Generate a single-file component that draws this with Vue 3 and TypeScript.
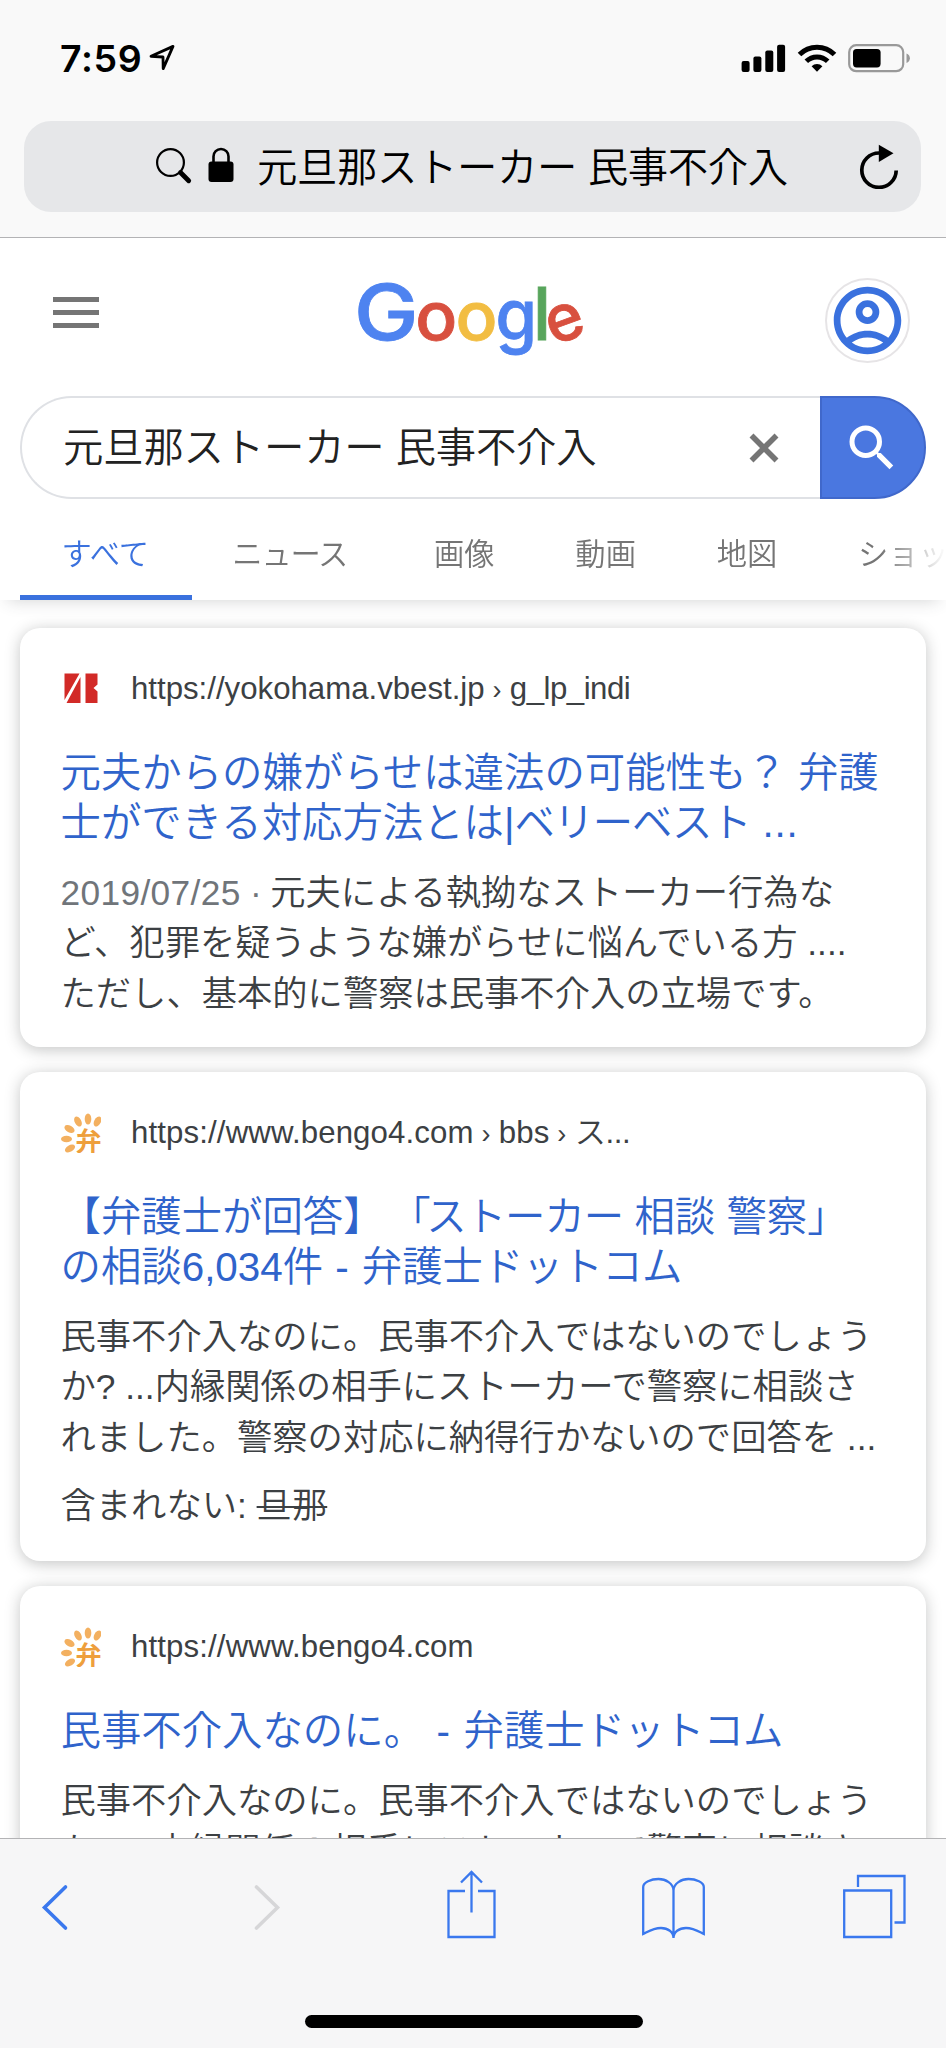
<script setup lang="ts">
interface Run {
  t: string
  ls?: number
}

interface SearchResult {
  icon: 'vbest' | 'bengo'
  url: Run[]
  title: Run[][]
  date?: string
  body: string[]
  missing?: string
}

const query = '元旦那ストーカー 民事不介入'
const tabs: string[] = ['すべて', 'ニュース', '画像', '動画', '地図', 'ショッピング']

const logo = [
  { ch: 'G', x: 354, size: 77, width: 64.5, color: '#4e83f0' },
  { ch: 'o', x: 415.3, size: 67, width: 42, color: '#d8503f' },
  { ch: 'o', x: 455.5, size: 67, width: 42, color: '#f2bd42' },
  { ch: 'g', x: 495.5, size: 70, width: 41.5, color: '#4e83f0' },
  { ch: 'l', x: 533, size: 73.5, width: 18, color: '#58a55c' },
]

const petals = [
  { x: 27, y: 6, r: 90 },
  { x: 17, y: 8.5, r: 62 },
  { x: 36.5, y: 8.5, r: 118 },
  { x: 8.5, y: 16, r: 28 },
  { x: 5.5, y: 26, r: 0 },
  { x: 9, y: 35.5, r: -30 },
]

const results: SearchResult[] = [
  {
    icon: 'vbest',
    url: [{ t: 'https://yokohama.vbest.jp' }, { t: 'g_lp_indi', ls: -0.5 }],
    title: [
      [{ t: '元夫からの嫌がらせは違法の可能性も？ 弁護' }],
      [{ t: '士ができる対応方法とは|' }, { t: 'ベリーベスト', ls: -1.2 }, { t: ' ...', ls: 0.8 }],
    ],
    date: '2019/07/25',
    body: ['元夫による執拗なストーカー行為な', 'ど、犯罪を疑うような嫌がらせに悩んでいる方 ....', 'ただし、基本的に警察は民事不介入の立場です。'],
  },
  {
    icon: 'bengo',
    url: [{ t: 'https://www.bengo4.com', ls: 0.13 }, { t: 'bbs', ls: 0.1 }, { t: 'ス...', ls: -0.4 }],
    title: [
      [{ t: '【弁護士が回答】' }, { t: ' 「', ls: -4.5 }, { t: 'ストーカー', ls: -1 }, { t: ' 相談 警察」' }],
      [{ t: 'の相談6,034件' }, { t: ' - ', ls: 0.9 }, { t: '弁護士' }, { t: 'ドットコム', ls: -0.6 }],
    ],
    body: ['民事不介入なのに。民事不介入ではないのでしょう', 'か? ...内縁関係の相手にストーカーで警察に相談さ', 'れました。警察の対応に納得行かないので回答を ...'],
    missing: '旦那',
  },
  {
    icon: 'bengo',
    url: [{ t: 'https://www.bengo4.com', ls: 0.13 }],
    title: [[{ t: '民事不介入なのに。' }, { t: ' - ', ls: 1.2 }, { t: '弁護士' }, { t: 'ドットコム', ls: -0.8 }]],
    body: ['民事不介入なのに。民事不介入ではないのでしょう', 'か? ...内縁関係の相手にストーカーで警察に相談さ'],
  },
]

const spacing = (run: Run) => ({ letterSpacing: `${run.ls ?? 0}px` })
</script>

<template>
  <div class="screen">
    <header class="chrome">
      <div class="status">
        <span class="time">7:59</span>
        <svg class="loc" width="28" height="28" viewBox="0 0 28 28">
          <path d="M3 12.3 25 2.4 15.2 24.6 15 13z" fill="none" stroke="#000" stroke-width="2.8" stroke-linejoin="round" />
        </svg>
        <svg class="signals" width="170" height="30" viewBox="0 0 170 30">
          <rect x="0.6" y="17" width="8" height="11" rx="2" />
          <rect x="12.4" y="12.5" width="8" height="15.5" rx="2" />
          <rect x="24.3" y="6.6" width="8" height="21.4" rx="2" />
          <rect x="36.1" y="0.8" width="8" height="27.2" rx="2" />
          <g fill="none" stroke="#000" stroke-width="5">
            <path d="M58.5 10.6a24.6 24.6 0 0 1 35 0" />
            <path d="M65.3 17.3a15.2 15.2 0 0 1 21.4 0" />
          </g>
          <path d="M70.6 22.2a7.6 7.6 0 0 1 10.8 0L76 27.8z" />
          <rect x="108.2" y="1.2" width="54" height="26" rx="7" fill="none" stroke="#999" stroke-width="2.2" />
          <rect x="112" y="5" width="27.6" height="18.4" rx="3.6" />
          <path d="M165.5 9.6c2 .8 3.4 2.5 3.4 4.7s-1.4 3.9-3.4 4.7z" fill="#999" />
        </svg>
      </div>
      <div class="address">
        <svg class="mag" width="38" height="38" viewBox="0 0 38 38">
          <circle cx="15.5" cy="15.5" r="13.4" fill="none" stroke="#000" stroke-width="2.2" />
          <path d="m25.5 25.5 8.2 8.2" stroke="#000" stroke-width="4.8" stroke-linecap="round" />
        </svg>
        <svg class="lock" width="26" height="36" viewBox="0 0 26 36">
          <path d="M5.5 16V9.5a7.5 7.5 0 0 1 15 0V16" fill="none" stroke="#000" stroke-width="2.6" />
          <rect x="0.5" y="14.5" width="25" height="20.5" rx="3" />
        </svg>
        <span class="address-text">{{ query }}</span>
        <svg class="reload" width="42" height="46" viewBox="0 0 42 46">
          <path d="M37.2 27.5A17.2 17.2 0 1 1 20 10h2" fill="none" stroke="#000" stroke-width="3.7" />
          <path d="M19.8 1.8 34.5 10.3 19.8 19z" />
        </svg>
      </div>
    </header>

    <main class="page">
      <section class="head">
        <div class="brand">
          <div class="menu"><i></i><i></i><i></i></div>
          <svg class="logo" width="240" height="90" viewBox="350 275 240 90" role="img" aria-label="Google">
            <text
              v-for="(l, i) in logo"
              :key="i"
              :x="l.x"
              y="338.5"
              :font-size="l.size"
              :textLength="l.width"
              lengthAdjust="spacingAndGlyphs"
              :fill="l.color"
              :stroke="l.color"
            >{{ l.ch }}</text>
            <text x="0" y="0" transform="translate(553.3 344.8) rotate(-20)" font-size="65" textLength="37.5" lengthAdjust="spacingAndGlyphs" fill="#d8503f" stroke="#d8503f">e</text>
          </svg>
          <div class="avatar">
            <svg width="81" height="81" viewBox="0 0 24 24">
              <path fill="#3a71de" fill-rule="evenodd" d="M12 2C6.48 2 2 6.48 2 12s4.48 10 10 10 10-4.48 10-10S17.52 2 12 2zM7.35 18.5C8.66 17.56 10.26 17 12 17s3.34.56 4.65 1.5C15.34 19.44 13.74 20 12 20s-3.34-.56-4.65-1.5zm10.79-1.38C16.45 15.8 14.32 15 12 15s-4.45.8-6.14 2.12C4.7 15.73 4 13.95 4 12c0-4.42 3.58-8 8-8s8 3.58 8 8c0 1.95-.7 3.73-1.86 5.12z" />
              <circle cx="12" cy="9.5" r="2.5" fill="none" stroke="#3a71de" stroke-width="2" />
            </svg>
          </div>
        </div>

        <div class="search">
          <div class="field">
            <span>{{ query }}</span>
            <svg width="30" height="30" viewBox="0 0 30 30">
              <path d="M2.5 2.5l25 25M27.5 2.5l-25 25" stroke="#757575" stroke-width="5.6" />
            </svg>
          </div>
          <div class="go">
            <svg width="60" height="60" viewBox="0 0 24 24">
              <path fill="#fff" d="M15.5 14h-.79l-.28-.27A6.471 6.471 0 0 0 16 9.5 6.5 6.5 0 1 0 9.5 16c1.61 0 3.09-.59 4.23-1.57l.27.28v.79l5 4.99L20.49 19l-4.99-5zm-6 0C7.01 14 5 11.99 5 9.5S7.01 5 9.5 5 14 7.01 14 9.5 11.99 14 9.5 14z" />
            </svg>
          </div>
        </div>

        <nav class="tabs">
          <span v-for="(t, i) in tabs" :key="t" class="tab" :class="{ active: i === 0, news: i === 1 }">{{ t }}</span>
        </nav>
      </section>

      <section class="results">
        <article v-for="(r, i) in results" :key="i" class="card">
          <div class="source">
            <svg v-if="r.icon === 'vbest'" class="fav" width="40" height="40" viewBox="0 0 40 40" fill="#d22a27">
              <path d="M3.5 4.5h15L3.5 31zM19.5 8v26h-14z" />
              <path d="M24.5 4.5h12v11l-4 3.5 4 3.5v11.5h-12z" />
            </svg>
            <svg v-else class="fav" width="40" height="40" viewBox="0 0 40 40">
              <ellipse
                v-for="(p, k) in petals"
                :key="k"
                :cx="p.x"
                :cy="p.y"
                rx="5.5"
                ry="3.3"
                :transform="`rotate(${p.r} ${p.x} ${p.y})`"
                fill="#f3b060"
              />
              <text x="14.5" y="37.5" font-size="26" font-weight="700" fill="#ee9f3c">弁</text>
            </svg>
            <span class="url"><template v-for="(part, k) in r.url" :key="k"><b v-if="k > 0"> › </b><i :style="spacing(part)">{{ part.t }}</i></template></span>
          </div>
          <h3 class="title">
            <span v-for="(line, n) in r.title" :key="n"><i v-for="(run, k) in line" :key="k" :style="spacing(run)">{{ run.t }}</i></span>
          </h3>
          <p class="snippet">
            <span v-for="(line, k) in r.body" :key="line"><template v-if="k === 0 && r.date"><em>{{ r.date }}</em><em class="dot"> · </em></template>{{ line }}</span>
          </p>
          <p v-if="r.missing" class="missing">含まれない: <s>{{ r.missing }}</s></p>
        </article>
      </section>
    </main>

    <footer class="toolbar">
      <div class="actions">
        <svg width="64" height="70" viewBox="0 0 64 70">
          <path d="M25.5 17 4.500 37.500 25.500 58" class="chev" />
        </svg>
        <svg width="64" height="70" viewBox="0 0 64 70">
          <path d="M15.500 17 36.500 37.500 15.500 58" class="chev off" />
        </svg>
        <svg width="64" height="70" viewBox="0 0 64 70">
          <path d="M23 21H6.500v46h46v-46H36M29.500 42.500V2.500M19 12.500 29.500 2l10.500 10.500" />
        </svg>
        <svg width="64" height="70" viewBox="0 0 64 70">
          <path d="M31.500 20.500V68M31.500 20.500C31.500 13.500 23.500 9 16.500 9 9 9 1.200 12.500 1.200 17V64C5.500 62 11 58 19 58 26 58 31.500 62 31.500 68 31.500 62 37 58 44 58 52 58 57.500 62 61.800 64V17C61.800 12.500 54 9 46.500 9 39.500 9 31.500 13.500 31.500 20.500z" />
        </svg>
        <svg width="64" height="70" viewBox="0 0 64 70">
          <path d="M1.200 20.500h47v46.500h-47zM15 17V6h46.500v46.500H51.500" />
        </svg>
      </div>
      <div class="home"></div>
    </footer>
  </div>
</template>

<style>
body {
  background: #fff;
}
</style>

<style scoped>
.screen {
  width: 946px;
  height: 2048px;
  display: flex;
  flex-direction: column;
  overflow: hidden;
  background: #fff;
  font-family: "Liberation Sans", "Noto Sans CJK JP", sans-serif;
  font-weight: 350;
  text-spacing-trim: space-all;
  white-space: nowrap;
}
svg {
  display: block;
  flex: none;
}
.chrome {
  box-sizing: border-box;
  height: 238px;
  flex: none;
  background: #f9f9f9;
  border-bottom: 1px solid #b3b3b5;
}
.status {
  height: 121px;
  box-sizing: border-box;
  padding: 44px 35px 0 60px;
  display: flex;
  align-items: flex-start;
}
.time {
  width: 88px;
  font: 600 37.5px/29px Inter, sans-serif;
  letter-spacing: 0.6px;
}
.signals {
  margin-left: auto;
}
.address {
  box-sizing: border-box;
  height: 91px;
  margin: 0 25px 0 24px;
  border-radius: 27px;
  background: #e6e7e9;
  display: flex;
  align-items: flex-start;
  padding: 26px 20px 0 131px;
}
.lock {
  margin-left: 15px;
}
.address-text {
  margin-left: 23px;
  font-size: 40.4px;
  line-height: 40px;
  letter-spacing: -0.4px;
  padding-top: 1px;
}
.reload {
  margin: -4px 0 0 auto;
}
.page {
  flex: 1;
  min-height: 0;
  overflow: hidden;
}
.head {
  height: 362px;
  background: #fff;
  box-shadow: 0 8px 16px -8px rgba(60, 64, 67, 0.24);
}
.brand {
  height: 158px;
  display: flex;
  align-items: flex-start;
}
.menu {
  width: 46px;
  height: 31px;
  margin: 59px 0 0 53px;
  display: flex;
  flex-direction: column;
  justify-content: space-between;
}
.menu i {
  height: 5px;
  background: #757575;
}
.logo {
  margin: 38px 0 0 251px;
  font-family: Inter, sans-serif;
  font-weight: 500;
  stroke-width: 0.8px;
}
.avatar {
  box-sizing: border-box;
  width: 85px;
  height: 85px;
  margin: 40px 36px 0 auto;
  border: 2px solid #e6e4e6;
  border-radius: 50%;
  display: flex;
  align-items: center;
  justify-content: center;
}
.search {
  height: 103px;
  margin: 0 20px;
  display: flex;
}
.field {
  box-sizing: border-box;
  width: 800px;
  border: 2.5px solid #dfe1e5;
  border-right: 0;
  border-radius: 52px 0 0 52px;
  display: flex;
  align-items: center;
  justify-content: space-between;
  padding: 0 41px 0 41px;
  font-size: 40.4px;
  line-height: 40px;
  letter-spacing: -0.2px;
  color: #222;
}
.go {
  box-sizing: border-box;
  width: 106px;
  border: 2px solid #4068cb;
  border-radius: 0 52px 52px 0;
  background: #4a77e0;
  padding: 20px 0 0 20px;
}
.tabs {
  height: 101px;
  padding-left: 20px;
  display: flex;
  overflow: hidden;
  font-size: 30.3px;
  line-height: 111px;
  color: #757575;
  mask-image: linear-gradient(90deg, #000 880px, transparent 946px);
}
.tab {
  flex: none;
  box-sizing: border-box;
  padding: 0 40.35px;
}
.active {
  width: 172px;
  padding-left: 41.5px;
  color: #3a71de;
  border-bottom: 5px solid #3a71de;
}
.news {
  letter-spacing: -1.2px;
  padding-right: 46.5px;
}
.results {
  padding: 28px 20px 0;
  display: flex;
  flex-direction: column;
  gap: 25px;
}
.card {
  box-sizing: border-box;
  border-radius: 20px;
  background: #fff;
  box-shadow: 0 2.5px 15px rgba(32, 33, 36, 0.26);
  padding: 41px 40.5px 28px;
}
.source {
  height: 40px;
  display: flex;
  align-items: center;
}
.url {
  margin-left: 30.5px;
  font-size: 31.2px;
  line-height: 40px;
  color: #3c4043;
  white-space: pre;
}
.url b {
  font-size: 27px;
  font-weight: inherit;
  letter-spacing: 0.4px;
}
.url i,
.title i {
  font-style: normal;
  white-space: pre;
}
.title {
  margin: 39px 0 0;
  font-size: 40.4px;
  font-weight: inherit;
  line-height: 50.4px;
  color: #2f63cb;
}
.title span,
.snippet span {
  display: block;
}
.snippet,
.missing {
  margin: 19px 0 0;
  font-size: 35.3px;
  line-height: 50.4px;
  color: #3c4043;
}
.missing {
  margin: 18px 0 2px;
}
em {
  font-style: normal;
  color: #70757a;
  letter-spacing: 0.35px;
}
.dot {
  white-space: pre;
  letter-spacing: -0.6px;
}
s {
  text-decoration-thickness: 2px;
}
.toolbar {
  box-sizing: border-box;
  height: 210px;
  flex: none;
  background: #f6f6f7;
  border-top: 1px solid #b3b3b5;
  padding: 31px 39px 0 40px;
}
.actions {
  height: 145px;
  display: flex;
  justify-content: space-between;
}
.actions path {
  fill: none;
  stroke: #3a78ee;
  stroke-width: 2.3;
}
.actions .chev {
  stroke-width: 3.6;
  stroke-linecap: round;
}
.actions .off {
  stroke: #d6d6d8;
}
.home {
  width: 338px;
  height: 13px;
  margin: 0 auto;
  border-radius: 7px;
  background: #000;
}
</style>
